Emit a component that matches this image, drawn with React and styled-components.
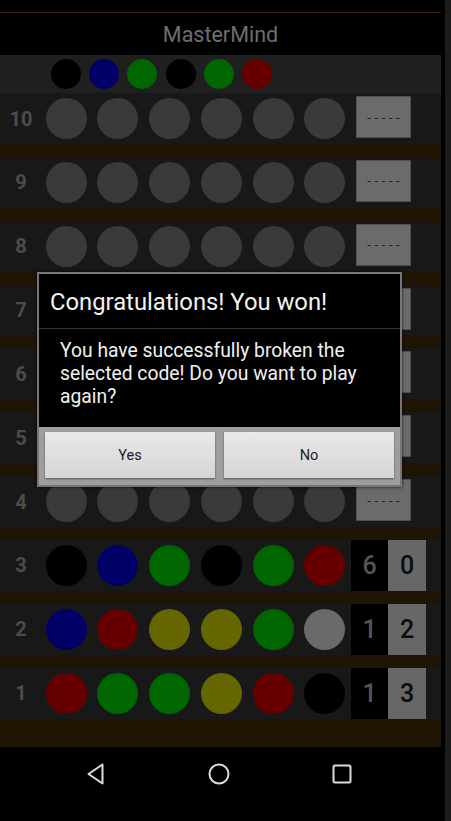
import React from 'react'
import styled, { createGlobalStyle } from 'styled-components'

const GlobalStyle = createGlobalStyle`
    body {
        margin: 0;
        background: #000;
        font-family: Roboto, "Noto Sans", sans-serif;
    }
`

const COLORS = {
    k: '#000000',
    b: '#000066',
    g: '#006600',
    r: '#660000',
    y: '#666600',
    w: '#6a6a6a',
    e: '#3a3a3a',
}

const CODE = ['k', 'b', 'g', 'k', 'g', 'r']

const ROWS = [
    { n: 10 },
    { n: 9 },
    { n: 8 },
    { n: 7 },
    { n: 6 },
    { n: 5 },
    { n: 4 },
    { n: 3, pegs: ['k', 'b', 'g', 'k', 'g', 'r'], black: 6, white: 0 },
    { n: 2, pegs: ['b', 'r', 'y', 'y', 'g', 'w'], black: 1, white: 2 },
    { n: 1, pegs: ['r', 'g', 'g', 'y', 'r', 'k'], black: 1, white: 3 },
]

const Screen = styled.div`
    position: relative;
    width: 451px;
    height: 821px;
    display: flex;
    overflow: hidden;
    background: #000;
`

const Main = styled.div`
    width: 441px;
    display: flex;
    flex-direction: column;
`

const Edge = styled.div`
    width: 6px;
    margin-left: 4px;
    background: #1b1b1b;
`

const StatusBar = styled.div`
    height: 12px;
    border-bottom: 1px solid #3a2100;
`

const TitleBar = styled.div`
    height: 42px;
    display: flex;
    align-items: center;
    justify-content: center;
    color: #6e6e6e;
    font-size: 21.5px;
`

const CodeRow = styled.div`
    height: 38px;
    background: #1f1f1f;
    display: flex;
    align-items: center;
    gap: 8.2px;
    padding-left: 51px;
`

const Peg = styled.div`
    width: ${p => p.$size}px;
    height: ${p => p.$size}px;
    border-radius: 50%;
    background: ${p => COLORS[p.$c]};
    flex-shrink: 0;
`

const Board = styled.div`
    height: 654px;
    background: #201403;
    display: flex;
    flex-direction: column;
    gap: 12.85px;
`

const Row = styled.div`
    height: 51px;
    background: #181818;
    display: flex;
    align-items: center;
`

const Label = styled.div`
    width: 42px;
    text-align: center;
    color: #4c4c4c;
    font-size: 20px;
    font-weight: bold;
`

const Pegs = styled.div`
    display: flex;
    gap: 10.8px;
    margin-left: 3.5px;
`

const ResultBox = styled.div`
    width: 53px;
    height: 40px;
    margin-left: 10.5px;
    align-self: flex-start;
    margin-top: 3px;
    background: #6b6b6b;
    border: 1px solid #4e4e4e;
    display: flex;
    align-items: center;
    justify-content: center;
    color: #1e1e1e;
    font-size: 13px;
    letter-spacing: 3.6px;
    text-indent: 3.6px;
`

const Score = styled.div`
    display: flex;
    align-self: stretch;
    margin-left: 5.5px;
`

const ScoreCell = styled.div`
    width: ${p => p.$w}px;
    display: flex;
    align-items: center;
    justify-content: center;
    font-size: 25px;
    font-weight: 500;
    background: ${p => (p.$light ? '#676767' : '#000')};
    color: ${p => (p.$light ? '#0c0c0c' : '#555')};
`

const NavBar = styled.div`
    height: 74px;
    display: flex;
    align-items: flex-start;
    justify-content: space-between;
    padding: 15px 87px 0 84px;
    box-sizing: border-box;
`

const Dialog = styled.div`
    position: absolute;
    left: 37px;
    top: 272px;
    width: 365px;
    height: 215px;
    box-sizing: border-box;
    border: 2px solid #767676;
    box-shadow: 0 0 3px rgba(0, 0, 0, 0.8);
    display: flex;
    flex-direction: column;
    background: #000;
`

const DialogTitle = styled.div`
    height: 55px;
    display: flex;
    align-items: center;
    padding: 2px 0 0 11px;
    box-sizing: border-box;
    color: #f2f2f2;
    font-size: 23.8px;
    border-bottom: 1px solid #333;
`

const DialogMessage = styled.div`
    flex: 1;
    padding: 10px 16px 0 21px;
    color: #f0f0f0;
    font-size: 19.3px;
    line-height: 23px;
`

const DialogButtons = styled.div`
    height: 58px;
    background: #9e9e9e;
    display: flex;
    gap: 9px;
    padding: 5px 6px 7px 6px;
    box-sizing: border-box;
`

const DialogButton = styled.div`
    flex: 1;
    display: flex;
    align-items: center;
    justify-content: center;
    background: linear-gradient(#e9e9e9, #d5d5d5);
    box-shadow: 0 1px 2px rgba(0, 0, 0, 0.45);
    color: #1c1c1c;
    font-size: 14.5px;
`

const BackIcon = () => (
    <svg width="24" height="24" viewBox="0 0 24 24">
        <path d="M18.5 2.5 L4.5 12 L18.5 21.5 Z" fill="none" stroke="#dcdcdc" strokeWidth="2" strokeLinejoin="round" />
    </svg>
)

const HomeIcon = () => (
    <svg width="24" height="24" viewBox="0 0 24 24">
        <circle cx="12" cy="12" r="9.5" fill="none" stroke="#dcdcdc" strokeWidth="2" />
    </svg>
)

const RecentIcon = () => (
    <svg width="24" height="24" viewBox="0 0 24 24">
        <rect x="3.5" y="3.5" width="17" height="17" rx="1.5" fill="none" stroke="#dcdcdc" strokeWidth="2" />
    </svg>
)

export default function App() {
    return (
        <Screen>
            <GlobalStyle />
            <Main>
                <StatusBar />
                <TitleBar>MasterMind</TitleBar>
                <CodeRow>
                    {CODE.map((c, i) => (
                        <Peg key={i} $size={30} $c={c} />
                    ))}
                </CodeRow>
                <Board>
                    {ROWS.map(row => (
                        <Row key={row.n}>
                            <Label>{row.n}</Label>
                            <Pegs>
                                {(row.pegs || ['e', 'e', 'e', 'e', 'e', 'e']).map((c, i) => (
                                    <Peg key={i} $size={41} $c={c} />
                                ))}
                            </Pegs>
                            {row.pegs ? (
                                <Score>
                                    <ScoreCell $w={37}>{row.black}</ScoreCell>
                                    <ScoreCell $w={38} $light>{row.white}</ScoreCell>
                                </Score>
                            ) : (
                                <ResultBox>-----</ResultBox>
                            )}
                        </Row>
                    ))}
                </Board>
                <NavBar>
                    <BackIcon />
                    <HomeIcon />
                    <RecentIcon />
                </NavBar>
            </Main>
            <Edge />
            <Dialog>
                <DialogTitle>Congratulations! You won!</DialogTitle>
                <DialogMessage>
                    You have successfully broken the selected code! Do you want to play again?
                </DialogMessage>
                <DialogButtons>
                    <DialogButton>Yes</DialogButton>
                    <DialogButton>No</DialogButton>
                </DialogButtons>
            </Dialog>
        </Screen>
    )
}
